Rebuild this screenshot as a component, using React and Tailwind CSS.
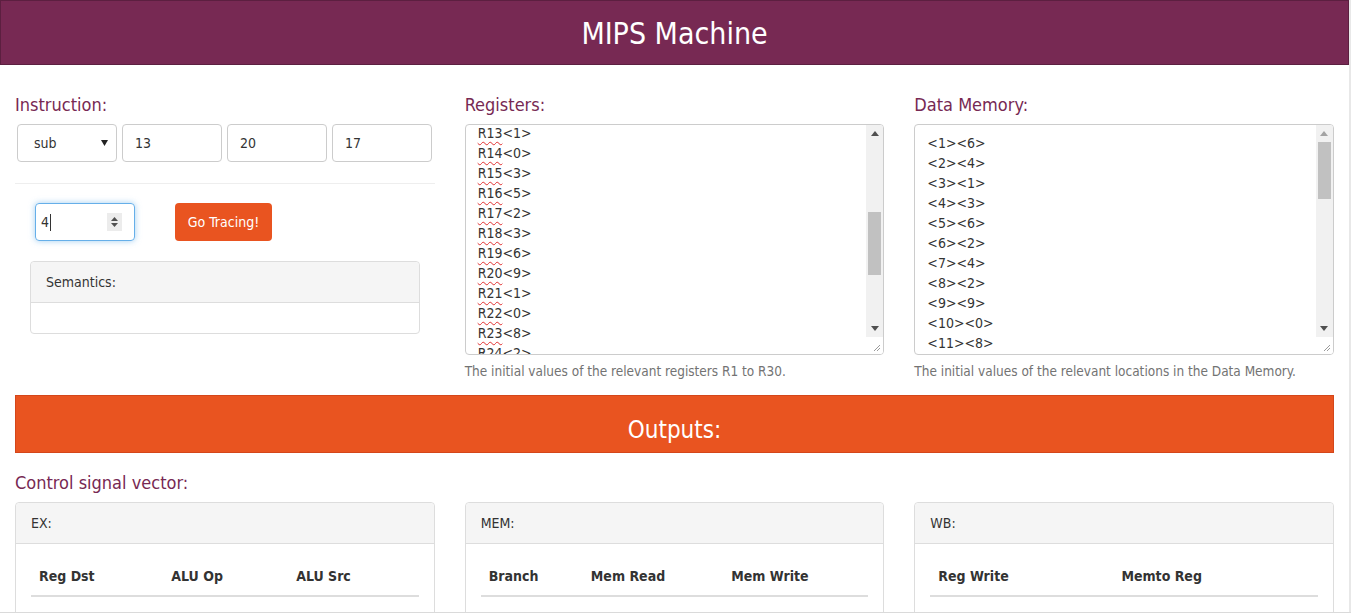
import React from 'react';

const regs = [
  ['R13', '1'], ['R14', '0'], ['R15', '3'], ['R16', '5'], ['R17', '2'], ['R18', '3'],
  ['R19', '6'], ['R20', '9'], ['R21', '1'], ['R22', '0'], ['R23', '8'], ['R24', '2'],
];

const mem = [
  ['1', '6'], ['2', '4'], ['3', '1'], ['4', '3'], ['5', '6'], ['6', '2'],
  ['7', '4'], ['8', '2'], ['9', '9'], ['10', '0'], ['11', '8'],
];

function FakeScrollbar({ thumbTop, thumbHeight, upDim }) {
  return (
    <div className="w-[17px] flex flex-col shrink-0">
      <div className="flex-1 bg-[#f1f1f1] relative flex flex-col">
        <div className="h-[17px] flex items-center justify-center">
          <svg width="8" height="5" viewBox="0 0 8 5">
            <path d="M0 5 L4 0 L8 5 Z" fill={upDim ? '#a3a3a3' : '#505050'} />
          </svg>
        </div>
        <div className="flex-1 relative">
          <div className="absolute left-[2px] right-[2px] bg-[#c1c1c1]" style={{ top: thumbTop, height: thumbHeight }} />
        </div>
        <div className="h-[17px] flex items-center justify-center">
          <svg width="8" height="5" viewBox="0 0 8 5">
            <path d="M0 0 L8 0 L4 5 Z" fill="#505050" />
          </svg>
        </div>
      </div>
      <div className="h-[17px] bg-white flex items-end justify-end p-[2px]">
        <svg width="9" height="9" viewBox="0 0 9 9">
          <path d="M8 2 L2 8 M8 5 L5 8" stroke="#9a9a9a" strokeWidth="1" />
        </svg>
      </div>
    </div>
  );
}

function Panel({ title, children, className = '' }) {
  return (
    <div className={`border border-[#dddddd] rounded-[4px] bg-white ${className}`}>
      <div className="h-[41px] bg-[#f5f5f5] border-b border-[#dddddd] rounded-t-[4px] px-[15px] flex items-center text-[14px] text-[#333333]">
        {title}
      </div>
      {children}
    </div>
  );
}

function SignalTable({ cols }) {
  return (
    <div className="p-[15px]">
      <table className="w-full border-collapse">
        <thead>
          <tr>
            {cols.map((c) => (
              <th key={c} className="text-left font-bold text-[14px] text-[#333333] px-[8px] pt-[7px] pb-[8px] border-b-2 border-[#dddddd]">
                {c}
              </th>
            ))}
          </tr>
        </thead>
        <tbody>
          <tr>
            {cols.map((c) => (
              <td key={c} className="h-[37px]" />
            ))}
          </tr>
        </tbody>
      </table>
    </div>
  );
}

export default function App() {
  const font = { fontFamily: 'Tahoma, "DejaVu Sans Condensed", "Liberation Sans", sans-serif' };

  return (
    <div className="w-[1351px] h-[615px] overflow-hidden flex flex-col bg-white" style={font}>
      <div className="flex h-[612px] overflow-hidden">
        <div className="w-[1349px] shrink-0">
          {/* header */}
          <div className="h-[65px] bg-[#772953] border border-[#5c1f40] flex items-center justify-center">
            <h1 className="text-white text-[30px] leading-none pt-[2px]">MIPS Machine</h1>
          </div>

          <div className="px-[15px]">
            {/* inputs */}
            <div className="grid grid-cols-3 gap-x-[30px] pt-[30px]">
              <div>
                <div className="text-[18px] text-[#772953] h-[29px] leading-[20px]">Instruction:</div>
                <div className="flex gap-[5px] pl-[2px]">
                  <div className="w-[100px] h-[38px] border border-[#cccccc] rounded-[4px] flex items-center justify-between pl-[16px] pr-[8px] text-[14px] text-[#333333]">
                    <span>sub</span>
                    <svg width="7" height="6" viewBox="0 0 7 6"><path d="M0 0 L7 0 L3.5 6 Z" fill="#222" /></svg>
                  </div>
                  {['13', '20', '17'].map((v) => (
                    <div key={v} className="w-[100px] h-[38px] border border-[#cccccc] rounded-[4px] flex items-center pl-[12px] text-[14px] text-[#333333]">
                      {v}
                    </div>
                  ))}
                </div>
                <div className="h-px bg-[#eeeeee] mt-[21px]" />
                <div className="flex items-center pl-[20px] pt-[19px]">
                  <div className="w-[100px] h-[38px] border border-[#66afe9] rounded-[4px] shadow-[0_0_6px_rgba(102,175,233,0.6)] flex items-center justify-between pl-[5px] pr-[12px] text-[14px] text-[#333333]">
                    <span className="flex items-center">4<span className="w-px h-[17px] bg-[#333] ml-[1px]" /></span>
                    <div className="w-[15px] h-[18px] bg-[#ececec] flex flex-col items-center justify-center gap-[2px]">
                      <svg width="7" height="4" viewBox="0 0 7 4"><path d="M0 4 L3.5 0 L7 4 Z" fill="#505050" /></svg>
                      <svg width="7" height="4" viewBox="0 0 7 4"><path d="M0 0 L7 0 L3.5 4 Z" fill="#505050" /></svg>
                    </div>
                  </div>
                  <button className="ml-[40px] w-[97px] h-[38px] bg-[#e95420] text-white text-[14px] rounded-[4px]">
                    Go Tracing!
                  </button>
                </div>
                <div className="px-[15px] pt-[20px]">
                  <Panel title="Semantics:">
                    <div className="h-[30px]" />
                  </Panel>
                </div>
              </div>

              <div>
                <div className="text-[18px] text-[#772953] h-[29px] leading-[20px]">Registers:</div>
                <div className="h-[231px] border border-[#cccccc] rounded-[4px] flex overflow-hidden">
                  <div className="flex-1 pl-[12px] text-[14px] leading-[20px] text-[#333333] overflow-hidden">
                    <div className="-mt-[2px]">
                      {regs.map(([r, v]) => (
                        <div key={r}>
                          <span className="underline decoration-wavy decoration-[#e03030] decoration-1 underline-offset-[3px]">{r}</span>
                          &lt;{v}&gt;
                        </div>
                      ))}
                    </div>
                  </div>
                  <FakeScrollbar thumbTop={70} thumbHeight={63} />
                </div>
                <div className="text-[13.5px] text-[#737373] mt-[6px]">The initial values of the relevant registers R1 to R30.</div>
              </div>

              <div>
                <div className="text-[18px] text-[#772953] h-[29px] leading-[20px]">Data Memory:</div>
                <div className="h-[231px] border border-[#cccccc] rounded-[4px] flex overflow-hidden">
                  <div className="flex-1 pl-[12px] pt-[8px] text-[14px] leading-[20px] text-[#333333] overflow-hidden">
                    {mem.map(([a, v]) => (
                      <div key={a}>&lt;{a}&gt;&lt;{v}&gt;</div>
                    ))}
                  </div>
                  <FakeScrollbar thumbTop={0} thumbHeight={57} upDim />
                </div>
                <div className="text-[13.5px] text-[#737373] mt-[6px]">The initial values of the relevant locations in the Data Memory.</div>
              </div>
            </div>

            {/* outputs banner */}
            <div className="mt-[14px] h-[58px] bg-[#e95420] border border-[#d4461a] flex items-center justify-center">
              <h2 className="text-white text-[24px] leading-none pt-[12px]">Outputs:</h2>
            </div>

            <div className="text-[18px] text-[#772953] mt-[20px] h-[29px] leading-[20px]">Control signal vector:</div>

            <div className="grid grid-cols-3 gap-x-[30px]">
              <Panel title="EX:">
                <SignalTable cols={['Reg Dst', 'ALU Op', 'ALU Src']} />
              </Panel>
              <Panel title="MEM:">
                <SignalTable cols={['Branch', 'Mem Read', 'Mem Write']} />
              </Panel>
              <Panel title="WB:">
                <SignalTable cols={['Reg Write', 'Memto Reg']} />
              </Panel>
            </div>
          </div>
        </div>
        <div className="flex-1 bg-[#e8e8e8]" />
      </div>
      <div className="h-px bg-[#dadada]" />
      <div className="flex-1 bg-white" />
    </div>
  );
}
